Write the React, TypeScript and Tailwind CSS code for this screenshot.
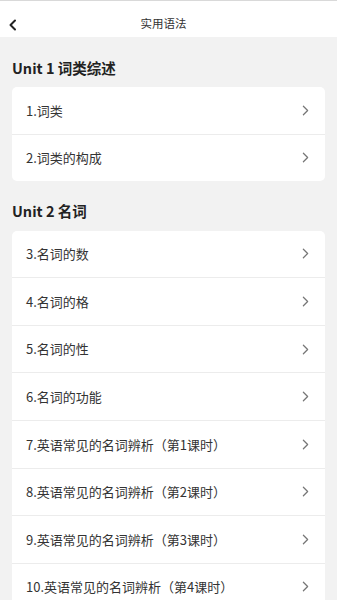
import { ChevronRight } from 'lucide-react'

const units = [
  { title: 'Unit 1 词类综述', items: ['1.词类', '2.词类的构成'] },
  {
    title: 'Unit 2 名词',
    items: [
      '3.名词的数',
      '4.名词的格',
      '5.名词的性',
      '6.名词的功能',
      '7.英语常见的名词辨析（第1课时）',
      '8.英语常见的名词辨析（第2课时）',
      '9.英语常见的名词辨析（第3课时）',
      '10.英语常见的名词辨析（第4课时）',
    ],
  },
]

export default function App() {
  return (
    <div
      className="min-h-[600px] bg-[#f2f2f2]"
      style={{ fontFamily: '"Noto Sans CJK SC", "Noto Sans", Roboto, sans-serif' }}
    >
      <div className="relative flex h-[37px] justify-center border-t border-[#d9d9d9] bg-white pt-[14px]">
        <svg className="absolute left-[8px] top-[18px] h-[12px] w-[9px]" viewBox="0 0 9 12" fill="none">
          <path d="M7 1.5L2.5 6L7 10.5" stroke="#222" strokeWidth={2} strokeLinecap="round" strokeLinejoin="round" />
        </svg>
        <span className="mr-[10px] text-[11.5px] leading-[16px] text-[#333]">实用语法</span>
      </div>

      {units.map((unit) => (
        <div key={unit.title} className="px-[12px] pt-[11px]">
          <div className="flex h-[39px] items-center text-[14.5px] font-bold text-[#222]">{unit.title}</div>
          <div className="overflow-hidden rounded-[5px] bg-white">
            {unit.items.map((item) => (
              <div
                key={item}
                className="flex h-[47.6px] items-center justify-between border-b border-[#ececec] pl-[14px] pr-[11px] last:h-[46px] last:border-b-0"
              >
                <span className="text-[13px] text-[#333]">{item}</span>
                <ChevronRight className="h-[17px] w-[17px] text-[#777]" strokeWidth={1.75} />
              </div>
            ))}
          </div>
        </div>
      ))}
    </div>
  )
}
